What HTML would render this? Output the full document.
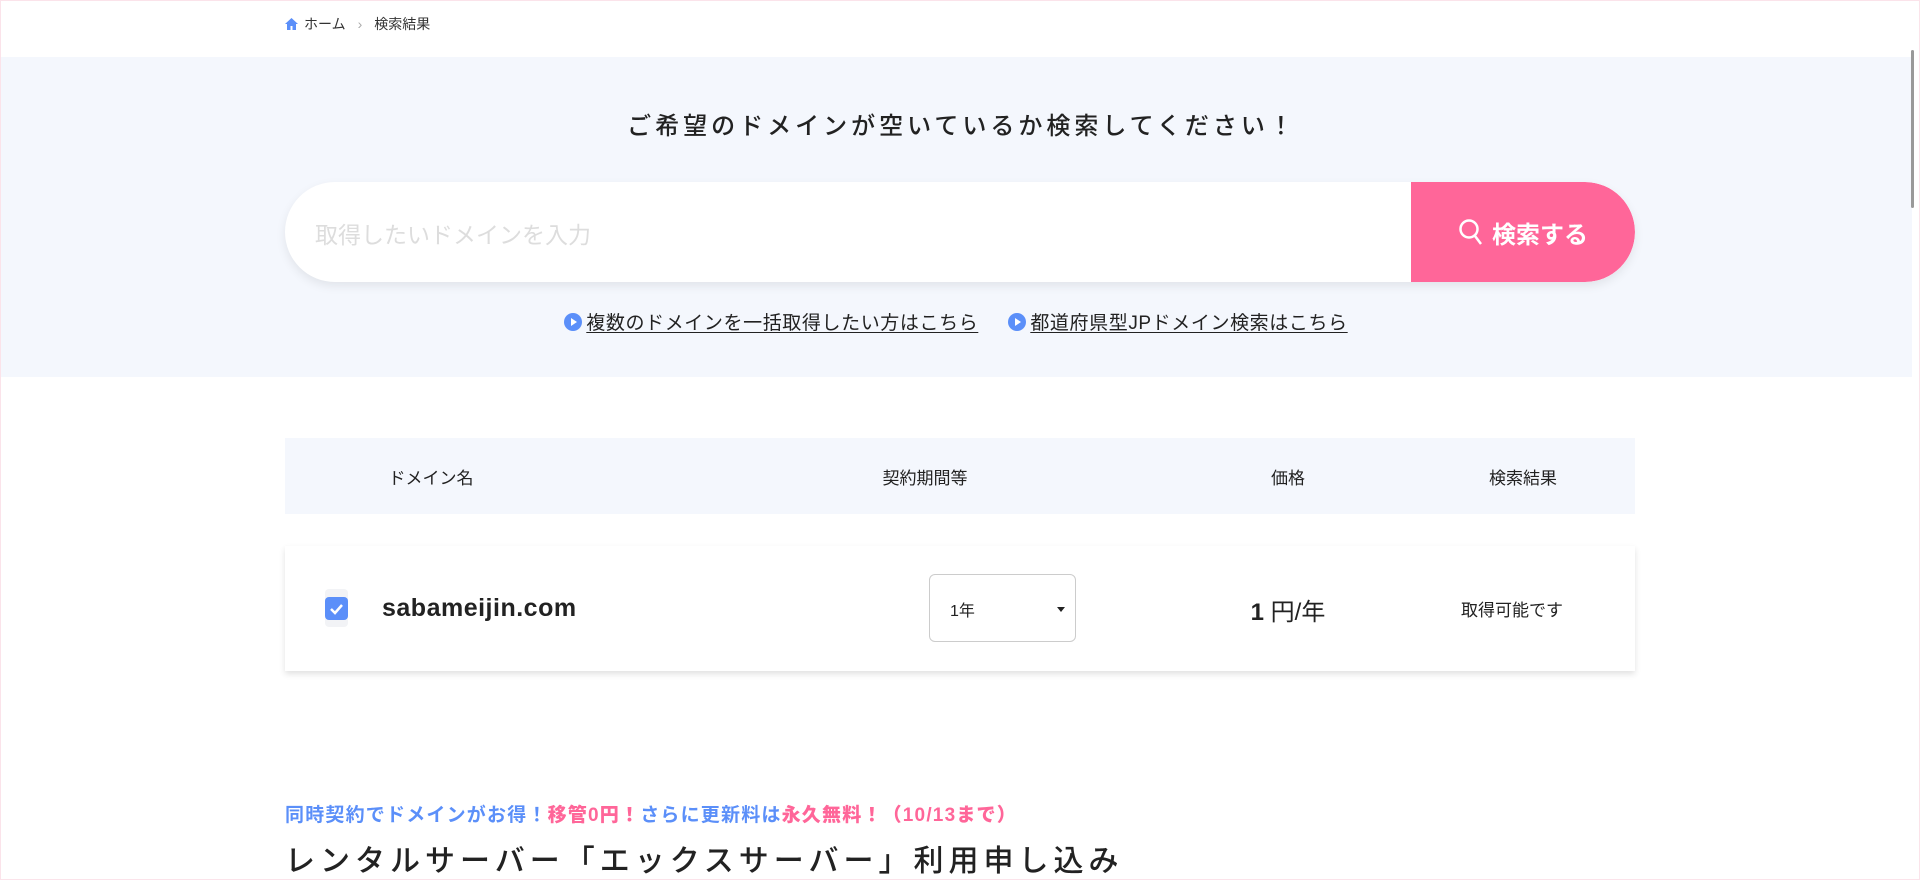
<!DOCTYPE html>
<html><head><meta charset="utf-8"><style>
*{margin:0;padding:0;box-sizing:border-box}
body{width:1920px;height:880px;overflow:hidden;background:#fff;font-family:"Liberation Sans","Noto Sans CJK JP",sans-serif;color:#222;position:relative}
.frame{position:absolute;inset:0;border:1px solid #fbe3ea;pointer-events:none}
.bc{position:absolute;left:285px;top:14px;font-size:14px;color:#333;display:flex;align-items:center;gap:6px}
.band{position:absolute;left:0;top:57px;width:1912px;height:320px;background:#f4f7fd}
.title{position:absolute;top:106px;left:0;width:1912px;text-align:center;font-size:24px;letter-spacing:4px;font-weight:500;padding-left:12px}
.search{position:absolute;left:285px;top:182px;width:1350px;height:100px;background:#fff;border-radius:50px;box-shadow:0 4px 10px rgba(0,0,0,.08);overflow:hidden}
.search .ph{position:absolute;left:30px;top:34px;font-size:23px;color:#ddd}
.search .btn{position:absolute;right:0;top:0;width:224px;height:100px;background:#ff6699;border-radius:0 50px 50px 0;color:#fff;font-size:24px;font-weight:bold;display:flex;align-items:center;justify-content:center;gap:8px}
.links{position:absolute;top:308px;left:0;width:1912px;display:flex;justify-content:center;gap:30px;font-size:19px;letter-spacing:0.6px}
.links span{display:flex;align-items:center;gap:4px}
.links u{text-underline-offset:3px}
.dot{width:18px;height:18px;border-radius:50%;background:#5b8ff9;position:relative}
.dot:after{content:"";position:absolute;left:7px;top:5px;border-left:6px solid #fff;border-top:4px solid transparent;border-bottom:4px solid transparent}
.th{position:absolute;left:285px;top:438px;width:1350px;height:76px;background:#f4f7fd;font-size:17px}
.th div,.row .c{position:absolute;transform:translateX(-50%);white-space:nowrap}
.th div{top:26px}
.row{position:absolute;left:285px;top:546px;width:1350px;height:125px;background:#fff;box-shadow:0 3px 6px rgba(0,0,0,.12)}
.cb{position:absolute;left:40px;top:43px;width:23px;height:38px;background:#f2f3f6;border-radius:4px}
.cb i{position:absolute;left:0;top:8px;width:23px;height:23px;background:#5b8ff9;border-radius:4px}
.dom{position:absolute;left:97px;top:48px;font-size:25px;font-weight:bold;color:#222;letter-spacing:0.5px}
.sel{position:absolute;left:644px;top:28px;width:147px;height:68px;border:1px solid #ccc;border-radius:6px;font-size:16px;padding:22px 0 0 20px}
.sel:after{content:"";position:absolute;right:10px;top:32px;border-top:5px solid #222;border-left:4px solid transparent;border-right:4px solid transparent}
.promo{position:absolute;left:285px;top:800px;font-size:19px;font-weight:bold;color:#5b8ff9;letter-spacing:1.2px}
.promo b{color:#ff6699}
.h2{position:absolute;left:285px;top:836px;font-size:30px;letter-spacing:5px;font-weight:500}
.sb{position:absolute;right:6px;top:50px;width:3px;height:158px;background:#999;border-radius:2px}
</style></head><body>
<div class="bc"><svg width="13" height="12" viewBox="0 0 13 12"><path d="M6.5 0L0 6h2v6h3.5V8h2v4H11V6h2z" fill="#5b8ff9"/></svg>ホーム<span style="color:#aaa;margin:0 6px">›</span>検索結果</div>
<div class="band"></div>
<div class="title">ご希望のドメインが空いているか検索してください！</div>
<div class="search"><div class="ph">取得したいドメインを入力</div><div class="btn"><svg width="26" height="28" viewBox="0 0 26 28"><circle cx="11" cy="11" r="8.5" fill="none" stroke="#fff" stroke-width="2.5"/><path d="M17 18l6 8" stroke="#fff" stroke-width="2.5"/></svg>検索する</div></div>
<div class="links"><span><i class="dot"></i><u>複数のドメインを一括取得したい方はこちら</u></span><span><i class="dot"></i><u>都道府県型JPドメイン検索はこちら</u></span></div>
<div class="th"><div style="left:146px">ドメイン名</div><div style="left:640px">契約期間等</div><div style="left:1003px">価格</div><div style="left:1238px">検索結果</div></div>
<div class="row"><div class="cb"><i><svg width="23" height="23" viewBox="0 0 23 23"><path d="M6 12l4 4 7-8" stroke="#fff" stroke-width="2.5" fill="none"/></svg></i></div>
<div class="dom">sabameijin.com</div>
<div class="sel">1年</div>
<div class="c" style="left:1003px;top:46px;font-size:24px"><b>1</b> 円/年</div>
<div class="c" style="left:1227px;top:50px;font-size:17px">取得可能です</div></div>
<div class="promo">同時契約でドメインがお得！<b>移管0円！</b>さらに更新料は<b>永久無料！（10/13まで）</b></div>
<div class="h2">レンタルサーバー「エックスサーバー」利用申し込み</div>
<div class="sb"></div>
<div class="frame"></div>
</body></html>
